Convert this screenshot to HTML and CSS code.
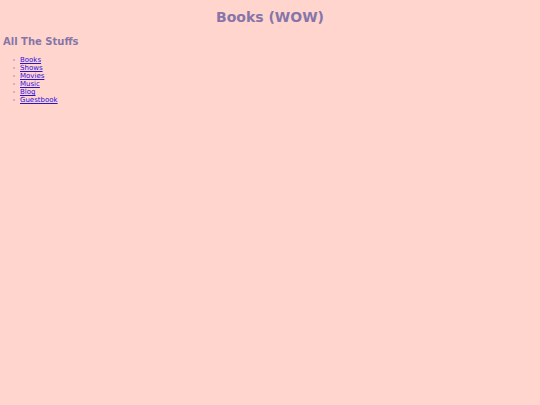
FILE: index.html
```html
<!DOCTYPE html>
<html lang="en">
<head>
<meta charset="utf-8">
<title>Books</title>
<link rel="stylesheet" href="styles.css">
</head>
<body>
<h1>Books (WOW)</h1>
<h2>All The Stuffs</h2>
<ul class="links">
  <li><a href="#books">Books</a></li>
  <li><a href="#shows">Shows</a></li>
  <li><a href="#movies">Movies</a></li>
  <li><a href="#music">Music</a></li>
  <li><a href="#blog">Blog</a></li>
  <li><a href="#guestbook">Guestbook</a></li>
</ul>
</body>
</html>
```
FILE: styles.css
```css
body {
  margin: 9px 3px;
  background-color: #ffd5cd;
  color: #8675a9;
  font-family: Verdana, "DejaVu Sans", sans-serif;
  font-size: 7px;
  line-height: 8px;
}

h1 {
  margin: 0 0 10px;
  font-size: 14px;
  line-height: 16px;
  text-align: center;
}

h2 {
  margin: 0 0 7px;
  font-size: 10px;
  line-height: 14px;
}

.links {
  margin: 0;
  padding-left: 10px;
  list-style: none;
}

.links li {
  display: flex;
  align-items: center;
}

.links li::before {
  content: "";
  width: 2px;
  height: 2px;
  margin-right: 5px;
  background-color: #d4b0c4;
}

.links a {
  color: #2a12dd;
}
```
